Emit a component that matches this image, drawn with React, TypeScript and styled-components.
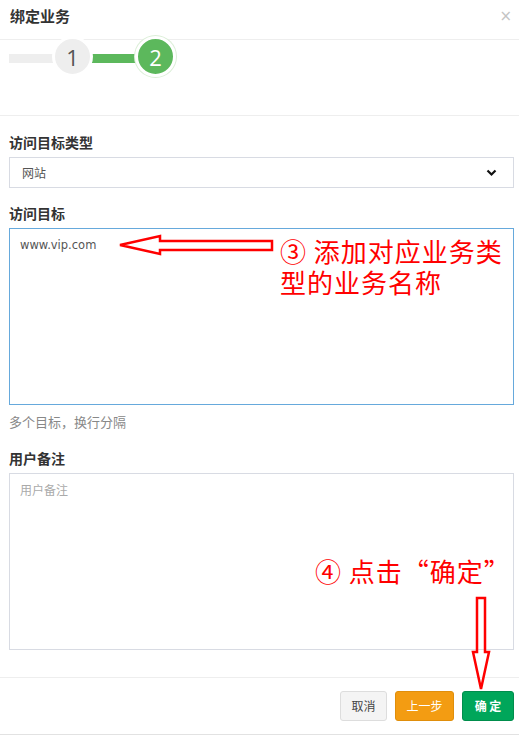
import React, { FC } from 'react';
import styled, { createGlobalStyle, css } from 'styled-components';

const GlobalStyle = createGlobalStyle`
  html, body {
    margin: 0;
    padding: 0;
    background: #fff;
  }
  body {
    font-family: "Noto Sans CJK SC", "Noto Sans", sans-serif;
  }
`;

const Modal = styled.div`
  position: relative;
  width: 519px;
  height: 735px;
  box-sizing: border-box;
  background: #fff;
  border-bottom: 1px solid #e2e2e2;
  overflow: hidden;
`;

const Header = styled.div`
  border-bottom: 1px solid #eee;
  display: flex;
  align-items: flex-start;
  justify-content: space-between;
  padding: 7px 7px 0 10px;
  height: 32px;
`;

const Title = styled.h4`
  margin: 0;
  font-size: 15px;
  line-height: 18px;
  font-weight: 700;
  color: #333;
`;

const Close = styled.span`
  font-family: "DejaVu Sans", sans-serif;
  font-size: 15px;
  line-height: 18px;
  color: #c4c4c4;
`;

const Steps = styled.div`
  margin-top: -5px;
  height: 80px;
  border-bottom: 1px solid #eee;
`;

const StepRow = styled.div`
  display: flex;
  align-items: center;
  height: 43px;
  padding-left: 9px;
`;

const Bar = styled.div<{ $done?: boolean }>`
  height: 9px;
  width: ${p => (p.$done ? '52px' : '48px')};
  margin-top: 3px;
  background: ${p => (p.$done ? '#5cb85c' : '#eee')};
  margin-left: ${p => (p.$done ? '-5px' : '0')};
  margin-right: -5px;
`;

const Circle = styled.div<{ $active?: boolean }>`
  position: relative;
  width: 35px;
  height: 35px;
  border-radius: 50%;
  border: 3px solid #fff;
  display: flex;
  align-items: center;
  justify-content: center;
  font-family: "Open Sans", "Noto Sans", sans-serif;
  font-size: 22px;
  font-weight: 400;
  background: ${p => (p.$active ? '#5cb85c' : '#eee')};
  color: ${p => (p.$active ? '#fff' : '#555')};
  ${p =>
    p.$active &&
    css`
      box-shadow: 0 0 0 1px #dcefd8;
    `}
`;

const Form = styled.div`
  padding: 16px 5px 0 9px;
`;

const Label = styled.label`
  display: block;
  font-size: 14px;
  line-height: 20px;
  font-weight: 700;
  color: #333;
`;

const fieldBase = css`
  box-sizing: border-box;
  width: 100%;
  margin-top: 5px;
  background: #fff;
  font-size: 12px;
`;

const Select = styled.div`
  ${fieldBase}
  height: 31px;
  border: 1px solid #d8dbe3;
  display: flex;
  align-items: center;
  justify-content: space-between;
  padding: 0 16px 0 12px;
  color: #555;
`;

const TextArea = styled.div<{ $focus?: boolean }>`
  ${fieldBase}
  height: 177px;
  padding: 8px 10px;
  line-height: 16px;
  border: 1px solid ${p => (p.$focus ? '#66a9dc' : '#d8dbe3')};
  color: ${p => (p.$focus ? '#555' : '#aaa')};
  font-family: ${p => (p.$focus ? '"DejaVu Sans", sans-serif' : 'inherit')};
  font-size: ${p => (p.$focus ? '11.5px' : '12px')};
`;

const Help = styled.div`
  margin-top: 7px;
  margin-bottom: 16px;
  font-size: 13px;
  line-height: 20px;
  color: #888;
`;

const Gap = styled.div`
  height: 15px;
`;

const Footer = styled.div`
  margin-top: 27px;
  border-top: 1px solid #eee;
  padding: 13px 5px 12px 0;
  display: flex;
  justify-content: flex-end;
  gap: 8px;
`;

const Button = styled.button<{ $kind: 'default' | 'warning' | 'success' }>`
  height: 30px;
  padding: 0;
  border-radius: 3px;
  font-family: inherit;
  font-size: 12px;
  line-height: 28px;
  white-space: nowrap;
  cursor: pointer;
  border: 1px solid;
  ${p =>
    p.$kind === 'default' &&
    css`
      background: #f4f4f4;
      border-color: #ddd;
      color: #444;
      width: 47px;
    `}
  ${p =>
    p.$kind === 'warning' &&
    css`
      background: #f39c12;
      border-color: #e08e0b;
      color: #fff;
      width: 59px;
    `}
  ${p =>
    p.$kind === 'success' &&
    css`
      background: #00a65a;
      border-color: #008d4c;
      color: #fff;
      font-weight: 700;
      width: 52px;
    `}
`;

const Note = styled.div<{ $top: number; $left: number }>`
  position: absolute;
  top: ${p => p.$top}px;
  left: ${p => p.$left}px;
  color: #ff0000;
  font-size: 26px;
  line-height: 31px;
  letter-spacing: 1px;
  white-space: nowrap;
`;

const Overlay = styled.svg`
  position: absolute;
  top: 0;
  left: 0;
  pointer-events: none;
`;

const Chevron: FC = () => (
  <svg width="11" height="8" viewBox="0 0 11 8">
    <polyline points="1.5,1.5 5.5,5.5 9.5,1.5" fill="none" stroke="#111" strokeWidth="2.2" />
  </svg>
);

const App: FC = () => {
  return (
    <>
      <GlobalStyle />
      <Modal>
        <Header>
          <Title>绑定业务</Title>
          <Close>×</Close>
        </Header>

        <Steps>
          <StepRow>
            <Bar />
            <Circle>1</Circle>
            <Bar $done />
            <Circle $active>2</Circle>
          </StepRow>
        </Steps>

        <Form>
          <Label>访问目标类型</Label>
          <Select>
            <span>网站</span>
            <Chevron />
          </Select>
          <Gap />
          <Label>访问目标</Label>
          <TextArea $focus>www.vip.com</TextArea>
          <Help>多个目标，换行分隔</Help>
          <Label>用户备注</Label>
          <TextArea>用户备注</TextArea>
        </Form>

        <Footer>
          <Button $kind="default">取消</Button>
          <Button $kind="warning">上一步</Button>
          <Button $kind="success">确 定</Button>
        </Footer>

        <Note $top={235} $left={280}>
          ③ 添加对应业务类
          <br />
          型的业务名称
        </Note>
        <Note $top={555} $left={315}>④ 点击“确定”</Note>

        <Overlay width="519" height="735" viewBox="0 0 519 735">
          <path
            d="M120 245 L160 236 L160 241 L272 241 L272 250 L160 250 L160 254 Z"
            fill="none"
            stroke="#ff0000"
            strokeWidth="2.5"
          />
          <path
            d="M477 598 L485 598 L485 652 L489 652 L481 689 L473 652 L477 652 Z"
            fill="none"
            stroke="#ff0000"
            strokeWidth="2.5"
          />
        </Overlay>
      </Modal>
    </>
  );
};

export default App;
